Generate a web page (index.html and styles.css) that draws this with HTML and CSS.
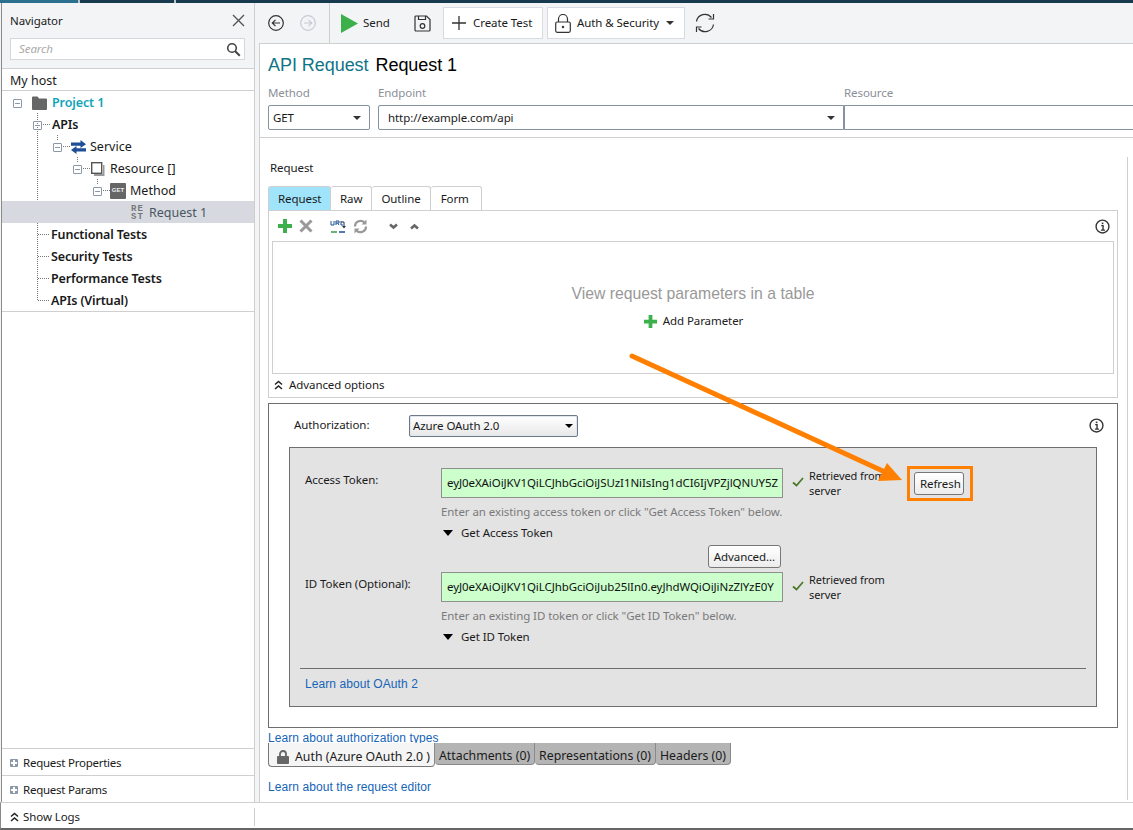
FILE: index.html
```html
<!DOCTYPE html>
<html lang="en">
<head>
    <meta charset="UTF-8">
    <meta name="viewport" content="width=device-width, initial-scale=1.0">
    <title>API Request</title>
    <link rel="stylesheet" href="styles.css">
</head>
<body>
    <div class="top-strip">
        <span class="strip-a"></span><span class="strip-b"></span><span class="strip-c"></span>
    </div>

    <div class="app">
        <aside class="navigator">
            <div class="nav-head">
                <div class="nav-title">
                    <span>Navigator</span>
                    <svg width="13" height="13" viewBox="0 0 13 13"><path d="M1 1l11 11M12 1L1 12" stroke="#555" stroke-width="1.4" fill="none"/></svg>
                </div>
                <div class="nav-search">
                    <span>Search</span>
                    <svg width="15" height="15" viewBox="0 0 15 15"><circle cx="6" cy="6" r="4.3" stroke="#444" stroke-width="1.6" fill="none"/><path d="M9.2 9.2l4.6 4.6" stroke="#444" stroke-width="2"/></svg>
                </div>
            </div>
            <div class="host-row">My host</div>
            <div class="tree">
                <svg class="tree-lines" width="254" height="220" viewBox="0 0 254 220">
                    <g stroke="#777" stroke-dasharray="1 1" fill="none">
                        <path d="M37.5 22V209.5H50"/>
                        <path d="M43 33.5H50"/>
                        <path d="M57.5 44V50M63 55.5H70"/>
                        <path d="M77.5 66V72M83 77.5H90"/>
                        <path d="M97.5 88V94M103 99.500H110"/>
                        <path d="M117.5 110V121.5H130"/>
                        <path d="M38 143.5H50M38 165.5H50M38 187.5H50"/>
                    </g>
                </svg>
                <div class="tree-row project">
                    <i class="toggle"></i>
                    <svg width="15" height="14" viewBox="0 0 15 14"><path d="M0 1.5a1 1 0 0 1 1-1h4.500l1.500 2h7a1 1 0 0 1 1 1V13a1 1 0 0 1-1 1H1a1 1 0 0 1-1-1z" fill="#666"/></svg>
                    <span>Project 1</span>
                </div>
                <div class="tree-row lvl-1 strong"><i class="toggle"></i><span>APIs</span></div>
                <div class="tree-row lvl-2">
                    <i class="toggle"></i>
                    <svg width="15" height="14" viewBox="0 0 15 14"><path d="M0 2.500h9.500V0L15 4.200 9.500 8V5.800H0zM15 8.300H5.500V6L0 10l5.500 4v-2.400H15z" fill="#1f4e96"/></svg>
                    <span>Service</span>
                </div>
                <div class="tree-row lvl-3">
                    <i class="toggle"></i>
                    <svg width="14" height="15" viewBox="0 0 14 15"><path d="M3 12h9V3h1.500v11H3z" fill="#999"/><rect x=".7" y=".7" width="10" height="10.600" fill="#fff" stroke="#555" stroke-width="1.4"/></svg>
                    <span>Resource []</span>
                </div>
                <div class="tree-row lvl-4">
                    <i class="toggle"></i>
                    <b class="get-badge">GET</b>
                    <span>Method</span>
                </div>
                <div class="tree-row lvl-5 selected">
                    <b class="rest-badge">RE<br>ST</b>
                    <span>Request 1</span>
                </div>
                <div class="tree-row flat strong"><span>Functional Tests</span></div>
                <div class="tree-row flat strong"><span>Security Tests</span></div>
                <div class="tree-row flat strong"><span>Performance Tests</span></div>
                <div class="tree-row flat strong"><span>APIs (Virtual)</span></div>
            </div>
            <div class="nav-fill"></div>
            <div class="nav-section"><i class="plus-box"></i>Request Properties</div>
            <div class="nav-section"><i class="plus-box"></i>Request Params</div>
        </aside>

        <main class="main">
            <div class="toolbar">
                <div class="tool-nav">
                    <svg width="16" height="16" viewBox="0 0 16 16"><circle cx="8" cy="8" r="7.300" fill="none" stroke="#333" stroke-width="1.2"/><path d="M12 8H4.500M7.500 4.800L4.300 8l3.200 3.200" fill="none" stroke="#333" stroke-width="1.2"/></svg>
                    <svg width="16" height="16" viewBox="0 0 16 16"><circle cx="8" cy="8" r="7.300" fill="none" stroke="#c4ccd4" stroke-width="1.2"/><path d="M4 8h7.500M8.500 4.800L11.700 8l-3.200 3.200" fill="none" stroke="#c4ccd4" stroke-width="1.2"/></svg>
                </div>
                <div class="tool-send">
                    <svg width="17" height="19" viewBox="0 0 17 19"><path d="M0 0l17 9.500L0 19z" fill="#3cb04a"/></svg>
                    <span>Send</span>
                </div>
                <svg class="tool-save" width="17" height="17" viewBox="0 0 17 17"><path d="M1 2a1 1 0 0 1 1-1h10.500L16 4.500V15a1 1 0 0 1-1 1H2a1 1 0 0 1-1-1z" fill="none" stroke="#333" stroke-width="1.2"/><path d="M4.500 1v3.500h7V1" fill="none" stroke="#333" stroke-width="1.2"/><circle cx="8.500" cy="11" r="2.300" fill="none" stroke="#333" stroke-width="1.2"/></svg>
                <div class="tool-btn create-btn">
                    <svg width="14" height="14" viewBox="0 0 14 14"><path d="M7 0v14M0 7h14" stroke="#333" stroke-width="1.3"/></svg>
                    <span>Create Test</span>
                </div>
                <div class="tool-btn auth-btn">
                    <svg width="16" height="19" viewBox="0 0 16 19"><rect x=".7" y="8" width="14.600" height="10.300" rx="1.500" fill="none" stroke="#333" stroke-width="1.2"/><path d="M3.500 8V5a4.500 4.500 0 0 1 9 0v3" fill="none" stroke="#333" stroke-width="1.2"/><circle cx="8" cy="13" r="1.200" fill="#333"/></svg>
                    <span>Auth &amp; Security</span>
                    <i class="caret"></i>
                </div>
                <svg class="tool-sync" width="20" height="20" viewBox="0 0 20 20"><path d="M1.500 8.500A8.500 8.500 0 0 1 16.500 4.500M18.500 11.500A8.500 8.500 0 0 1 3.500 15.500" fill="none" stroke="#333" stroke-width="1.2"/><path d="M18.500 1v5h-5M1.500 19v-5h5" fill="none" stroke="#333" stroke-width="1.2"/></svg>
            </div>

            <div class="content">
                <div class="request-head">
                    <h1><span class="title-kind">API Request</span> <span class="title-name">Request 1</span></h1>
                    <div class="fields">
                        <div class="field method-field">
                            <label>Method</label>
                            <div class="control">GET<i class="caret"></i></div>
                        </div>
                        <div class="field endpoint-field">
                            <label>Endpoint</label>
                            <div class="control">http://example.com/api<i class="caret"></i></div>
                        </div>
                        <div class="field resource-field">
                            <label>Resource</label>
                            <div class="control"></div>
                        </div>
                    </div>
                </div>

                <div class="editor">
                    <div class="section-label">Request</div>
                    <div class="tabs">
                        <div class="tab active">Request</div>
                        <div class="tab">Raw</div>
                        <div class="tab">Outline</div>
                        <div class="tab">Form</div>
                    </div>
                    <div class="params-panel">
                        <div class="params-tools">
                            <svg width="16" height="16" viewBox="0 0 16 16"><path d="M6 1h4v5h5v4h-5v5H6v-5H1V6h5z" fill="#3cb04a"/></svg>
                            <svg class="tool-x" width="14" height="14" viewBox="0 0 14 14"><path d="M1.500 1.500l11 11M12.500 1.500l-11 11" stroke="#999" stroke-width="3"/></svg>
                            <svg class="tool-url" width="16" height="15" viewBox="0 0 16 15"><path d="M11 3h3v5" fill="none" stroke="#234" stroke-width="1"/><path d="M12 7l2 2.500L16 7" fill="#234"/><path d="M1 13h6" stroke="#3a9a48" stroke-width="1.500"/><path d="M9 13h6" stroke="#1f4e96" stroke-width="1.500"/><path d="M1 2v4h3V2M6 6V2h3v2H6M9 6L7.500 4M11 2v4h2" fill="none" stroke="#1f4e96" stroke-width="1"/></svg>
                            <svg width="15" height="15" viewBox="0 0 15 15"><path d="M2 7.500A5.500 5.500 0 0 1 11.500 3.600M13 7.500A5.500 5.500 0 0 1 3.500 11.400" fill="none" stroke="#999" stroke-width="2.200"/><path d="M13.500 .5v5h-5zM1.500 14.500v-5h5z" fill="#999"/></svg>
                            <svg class="tool-chev" width="9" height="7" viewBox="0 0 9 7"><path d="M1 1.500l3.500 3 3.500-3" fill="none" stroke="#666" stroke-width="2.500"/></svg>
                            <svg class="tool-chev" width="9" height="7" viewBox="0 0 9 7"><path d="M1 5.500l3.500-3 3.500 3" fill="none" stroke="#666" stroke-width="2.500"/></svg>
                            <svg class="info" width="15" height="15" viewBox="0 0 14 14"><circle cx="7" cy="7" r="6" fill="none" stroke="#333" stroke-width="1.300"/><path d="M5.800 6.200H7.500V10.200M5.500 10.400h3.800" fill="none" stroke="#333" stroke-width="1.300"/><rect x="6.300" y="3.300" width="1.500" height="1.500" fill="#333"/></svg>
                        </div>
                        <div class="params-empty">
                            <div class="empty-text">View request parameters in a table</div>
                            <div class="add-param">
                                <svg width="15" height="15" viewBox="0 0 16 16"><path d="M6 1h4v5h5v4h-5v5H6v-5H1V6h5z" fill="#3cb04a"/></svg>
                                <span>Add Parameter</span>
                            </div>
                        </div>
                        <div class="advanced-row">
                            <svg width="9" height="10" viewBox="0 0 9 10"><path d="M1 4.500l3.500-3 3.500 3M1 9l3.500-3 3.500 3" fill="none" stroke="#222" stroke-width="1.500"/></svg>
                            <span>Advanced options</span>
                        </div>
                    </div>

                    <div class="auth-panel">
                        <div class="auth-top">
                            <span class="auth-label">Authorization:</span>
                            <div class="auth-select">Azure OAuth 2.0<i class="caret dark"></i></div>
                            <svg class="info" width="15" height="15" viewBox="0 0 14 14"><circle cx="7" cy="7" r="6" fill="none" stroke="#333" stroke-width="1.300"/><path d="M5.800 6.200H7.500V10.200M5.500 10.400h3.800" fill="none" stroke="#333" stroke-width="1.300"/><rect x="6.300" y="3.300" width="1.500" height="1.500" fill="#333"/></svg>
                        </div>
                        <div class="oauth-box">
                            <div class="token-row">
                                <div class="token-label">Access Token:</div>
                                <div class="token-value">eyJ0eXAiOiJKV1QiLCJhbGciOiJSUzI1NiIsIng1dCI6IjVPZjlQNUY5Z</div>
                                <svg class="check" width="12" height="10" viewBox="0 0 12 10"><path d="M1 5.500l3.500 3L11 1" fill="none" stroke="#4b7a28" stroke-width="1.800"/></svg>
                                <div class="token-status">Retrieved from server</div>
                                <div class="refresh-wrap"><div class="win-btn refresh-btn">Refresh</div></div>
                            </div>
                            <div class="token-hint">Enter an existing access token or click "Get Access Token" below.</div>
                            <div class="token-get"><i class="caret dark big"></i>Get Access Token</div>
                            <div class="advanced-wrap"><div class="win-btn">Advanced...</div></div>
                            <div class="token-row">
                                <div class="token-label">ID Token (Optional):</div>
                                <div class="token-value">eyJ0eXAiOiJKV1QiLCJhbGciOiJub25lIn0.eyJhdWQiOiJiNzZlYzE0Y</div>
                                <svg class="check" width="12" height="10" viewBox="0 0 12 10"><path d="M1 5.500l3.500 3L11 1" fill="none" stroke="#4b7a28" stroke-width="1.800"/></svg>
                                <div class="token-status">Retrieved from server</div>
                            </div>
                            <div class="token-hint">Enter an existing ID token or click "Get ID Token" below.</div>
                            <div class="token-get"><i class="caret dark big"></i>Get ID Token</div>
                            <div class="oauth-foot"><a href="#">Learn about OAuth 2</a></div>
                        </div>
                    </div>

                    <a class="auth-link" href="#">Learn about authorization types</a>
                    <div class="bottom-tabs">
                        <div class="btab active">
                            <svg width="12" height="14" viewBox="0 0 12 14"><path d="M3 6V4a3 3 0 0 1 6 0v2" fill="none" stroke="#666" stroke-width="1.800"/><rect y="6" width="12" height="8" rx="1" fill="#666"/></svg>
                            <span>Auth (Azure OAuth 2.0 )</span>
                        </div>
                        <div class="btab">Attachments (0)</div>
                        <div class="btab">Representations (0)</div>
                        <div class="btab">Headers (0)</div>
                    </div>
                    <a class="editor-link" href="#">Learn about the request editor</a>
                </div>
            </div>
        </main>
    </div>

    <div class="status-bar">
        <div class="show-logs">
            <svg width="9" height="10" viewBox="0 0 9 10"><path d="M1 4.500l3.500-3 3.500 3M1 9l3.500-3 3.500 3" fill="none" stroke="#222" stroke-width="1.500"/></svg>
            <span>Show Logs</span>
        </div>
    </div>

    <!-- annotation drawn on top of the screenshot -->
    <svg class="arrow" width="1133" height="830" viewBox="0 0 1133 830">
        <path d="M632 356L885 472" stroke="#ff8000" stroke-width="5" stroke-linecap="round" fill="none"/>
        <path d="M887 463L902 480L878 481z" fill="#ff8000"/>
    </svg>
</body>
</html>
```

FILE: styles.css
```css
:root {
    --panel-color: #f3f4f6;
    --line-color: #cfcfcf;
    --dark-line: #6e6e6e;
    --text-color: #1a1a1a;
    --link-color: #1565b8;
}
html, body {
    margin: 0;
    padding: 0;
}
body {
    position: relative;
    width: 1133px;
    height: 830px;
    overflow: hidden;
    display: flex;
    flex-direction: column;
    background-color: var(--panel-color);
    color: var(--text-color);
    font-family: 'Noto Sans', 'Open Sans', Arial, sans-serif;
    font-size: 11.5px;
    letter-spacing: -0.08px;
    line-height: 16px;
}
a {
    color: var(--link-color);
    text-decoration: none;
    font-family: 'Liberation Sans', Arial, sans-serif;
    font-size: 12px;
    letter-spacing: 0.08px;
}

/* top strip */
.top-strip {
    display: flex;
    gap: 2px;
    height: 3px;
    flex: none;
    background-color: #b8c4cc;
}
.strip-a { width: 78px; background-color: #2d6f8e; }
.strip-b { width: 94px; background-color: #173a4e; }
.strip-c { flex: 1; background-color: #173a4e; }

.app {
    flex: 1;
    display: flex;
    min-height: 0;
}

/* navigator */
.navigator {
    width: 252px;
    margin-left: 1px;
    display: flex;
    flex-direction: column;
    background-color: #fff;
    border-left: 1px solid #8a8a8a;
    border-right: 1px solid var(--line-color);
}
.nav-head {
    height: 66px;
    padding: 0 9px 0 8px;
    box-sizing: border-box;
    background-color: var(--panel-color);
    border-bottom: 1px solid var(--line-color);
}
.nav-title {
    display: flex;
    justify-content: space-between;
    align-items: center;
    height: 35px;
}
.nav-search {
    display: flex;
    justify-content: space-between;
    align-items: center;
    height: 22px;
    padding: 0 3px 0 8px;
    box-sizing: border-box;
    background-color: #fff;
    border: 1px solid #d4d8dc;
    color: #aaa;
    font-style: italic;
}
.host-row {
    height: 22px;
    line-height: 23px;
    padding-left: 8px;
    box-sizing: border-box;
    font-size: 12.5px;
    letter-spacing: 0;
    border-bottom: 1px solid var(--line-color);
}
.tree {
    position: relative;
    height: 220px;
    border-bottom: 1px solid var(--line-color);
    font-size: 12.5px;
    letter-spacing: 0;
}
.tree-lines {
    position: absolute;
    left: -2px;
    top: 0;
    pointer-events: none;
}
.tree-row {
    position: relative;
    display: flex;
    align-items: center;
    height: 22px;
    box-sizing: border-box;
    padding-top: 2px;
    gap: 5px;
}
.toggle {
    width: 7px;
    height: 7px;
    flex: none;
    border: 1px solid #8b98a8;
    border-radius: 1px;
    background: linear-gradient(#8b98a8, #8b98a8) center / 5px 1px no-repeat;
}
.project { padding-left: 11px; color: #12a5b8; font-weight: 600; letter-spacing: -0.1px; }
.project svg { margin-left: 5px; }
.lvl-1 { padding-left: 31px; }
.lvl-1 .toggle { margin-right: 5px; }
.lvl-2 { padding-left: 51px; }
.lvl-2 svg { margin: 0 -1px 0 4px; }
.lvl-3 { padding-left: 71px; }
.lvl-3 svg { margin-left: 4px; }
.lvl-4 { padding-left: 91px; }
.lvl-4 .get-badge { margin: 0 -1px 0 3px; }
.lvl-5 { padding-left: 129px; gap: 3px; }
.flat { padding-left: 49px; }
.strong { font-weight: 600; letter-spacing: -0.15px; }
.selected {
    background-color: #d6dae0;
    color: #4a5560;
}
.get-badge {
    width: 16px;
    height: 16px;
    flex: none;
    border-radius: 1px;
    background-color: #666;
    color: #eee;
    font-family: 'Liberation Sans', Arial, sans-serif;
    font-size: 6px;
    line-height: 14px;
    text-align: center;
}
.rest-badge {
    width: 15px;
    color: #777;
    font-family: 'Liberation Mono', monospace;
    font-size: 9px;
    line-height: 8px;
    letter-spacing: 1px;
}
.nav-fill { flex: 1; }
.nav-section {
    display: flex;
    align-items: center;
    gap: 5px;
    height: 27px;
    padding: 1px 0 0 8px;
    box-sizing: border-box;
    letter-spacing: -0.25px;
    border-top: 1px solid var(--line-color);
}
.plus-box {
    width: 8px;
    height: 8px;
    border-radius: 1px;
    background:
        linear-gradient(#fff, #fff) center / 6px 2px no-repeat,
        linear-gradient(#fff, #fff) center / 2px 6px no-repeat,
        #8b98a8;
}

/* main column */
.main {
    flex: 1;
    min-width: 0;
    display: flex;
    flex-direction: column;
    margin-left: 4px;
}
.toolbar {
    height: 40px;
    flex: none;
    display: flex;
    align-items: center;
}
.tool-nav {
    display: flex;
    align-items: center;
    gap: 16px;
    width: 71px;
    height: 40px;
    padding-left: 9px;
    box-sizing: border-box;
    border-right: 1px solid var(--line-color);
}
.tool-send {
    display: flex;
    align-items: center;
    gap: 5px;
    width: 50px;
    margin-left: 11px;
    color: #222;
}
.tool-save { margin-left: 23px; }
.tool-btn {
    display: flex;
    align-items: center;
    height: 32px;
    box-sizing: border-box;
    white-space: nowrap;
    background-color: #fff;
    border: 1px solid #d8dce0;
}
.create-btn {
    margin-left: 12px;
    width: 100px;
    padding-left: 8px;
    gap: 7px;
}
.auth-btn {
    margin-left: 4px;
    width: 138px;
    padding-left: 7px;
    gap: 6px;
}
.auth-btn .caret { margin-left: 1px; }
.tool-sync { margin-left: 10px; }
.caret {
    display: inline-block;
    width: 0;
    height: 0;
    border-left: 4px solid transparent;
    border-right: 4px solid transparent;
    border-top: 4px solid #333;
}
.caret.dark { border-top-color: #000; }
.caret.big {
    border-left-width: 5px;
    border-right-width: 5px;
    border-top-width: 6px;
    margin-right: 8px;
}

.content {
    flex: 1;
    min-height: 0;
    background-color: #fff;
    border-top: 1px solid var(--line-color);
    border-left: 1px solid var(--line-color);
}
.request-head {
    height: 94px;
    box-sizing: border-box;
    padding: 10px 0 0 8px;
    border-bottom: 1px solid var(--line-color);
}
h1 {
    margin: 0;
    font-family: 'Liberation Sans', Arial, sans-serif;
    font-size: 18px;
    font-weight: 400;
    line-height: 22px;
    letter-spacing: -0.05px;
}
.title-kind { color: #0f7488; }
.title-name { color: #000; margin-left: 2px; }
.fields {
    display: flex;
    margin-top: 9px;
}
.field label {
    display: block;
    height: 16px;
    margin-bottom: 4px;
    color: #8a8f98;
}
.control {
    display: flex;
    justify-content: space-between;
    align-items: center;
    height: 25px;
    box-sizing: border-box;
    padding: 0 8px 0 4px;
    background-color: #fff;
    border: 1px solid #8592a0;
}
.method-field { width: 102px; margin-right: 8px; }
.method-field .control { border-radius: 2px; }
.endpoint-field { width: 466px; }
.endpoint-field .control { padding-left: 9px; border-radius: 2px 0 0 2px; }
.resource-field { flex: 1; }
.resource-field .control { border-right: 0; border-radius: 0; }

/* editor */
.editor {
    height: 643px;
    margin-top: 19px;
    width: 868px;
    box-sizing: border-box;
    padding: 3px 0 0 8px;
    border-right: 1px solid var(--line-color);
}
.section-label {
    height: 16px;
    padding-left: 2px;
}
.tabs {
    display: flex;
    margin-top: 10px;
    height: 24px;
}
.tab {
    height: 24px;
    line-height: 24px;
    padding: 0 9px;
    box-sizing: border-box;
    border: 1px solid var(--line-color);
    border-bottom: 0;
    border-left: 0;
    border-radius: 3px 3px 0 0;
}
.tab:last-child { padding: 0 12px 0 10px; }
.tab.active {
    width: 63px;
    padding: 0 9px;
    background-color: #a0e4fb;
    border-left: 1px solid var(--line-color);
}
.params-panel {
    width: 850px;
    height: 188px;
    box-sizing: border-box;
    padding: 0 3px;
    display: flex;
    flex-direction: column;
    border: 1px solid var(--line-color);
}
.params-tools {
    display: flex;
    align-items: center;
    height: 30px;
    padding-left: 5px;
    flex: none;
}
.tool-x { margin-left: 6px; }
.tool-url { margin-left: 17px; margin-right: 7px; }
.tool-chev { margin-left: 21px; }
.tool-chev + .tool-chev { margin-left: 12px; }
.params-tools .info { margin-left: auto; margin-right: 4px; }
.params-empty {
    flex: 1;
    display: flex;
    flex-direction: column;
    align-items: center;
    border: 1px solid var(--line-color);
}
.empty-text {
    margin-top: 42px;
    color: #999;
    font-family: 'Liberation Sans', Arial, sans-serif;
    font-size: 15.75px;
    letter-spacing: 0;
    line-height: 20px;
}
.add-param {
    display: flex;
    align-items: center;
    gap: 5px;
    margin-top: 9px;
    color: #222;
}
.advanced-row {
    display: flex;
    align-items: center;
    gap: 6px;
    height: 23px;
    flex: none;
    box-sizing: border-box;
    padding: 0 0 2px 2px;
}

/* authorization */
.auth-panel {
    width: 850px;
    height: 325px;
    margin-top: 5px;
    box-sizing: border-box;
    padding: 0 20px;
    border: 1px solid var(--dark-line);
}
.auth-top {
    display: flex;
    align-items: center;
    height: 43px;
}
.auth-label {
    width: 115px;
    padding: 0 0 2px 5px;
}
.auth-select {
    display: flex;
    justify-content: space-between;
    align-items: center;
    width: 169px;
    height: 22px;
    box-sizing: border-box;
    padding: 0 4px 0 3px;
    border: 1px solid #6e7a88;
    border-radius: 2px;
    background: linear-gradient(#fff, #e8e8e8);
    box-shadow: 0 0 0 1px #dfe6ee inset;
}
.auth-top .info { margin-left: auto; margin-right: -7px; }
.oauth-box {
    height: 260px;
    box-sizing: border-box;
    padding: 20px 10px 0 15px;
    background-color: #e3e3e3;
    border: 1px solid var(--dark-line);
}
.token-row {
    display: flex;
    align-items: flex-start;
}
.token-label {
    width: 136px;
    padding-top: 4px;
}
.token-value {
    width: 342px;
    height: 30px;
    box-sizing: border-box;
    padding: 0 4px 0 5px;
    overflow: hidden;
    white-space: nowrap;
    line-height: 28px;
    color: #111;
    background-color: #ccffcc;
    border: 1px solid #8f8f8f;
}
.check {
    margin: 9px 0 0 9px;
    flex: none;
}
.token-status {
    width: 80px;
    margin-left: 5px;
    font-size: 11px;
    line-height: 15px;
}
.refresh-wrap {
    margin: -2px 0 -3px 18px;
    padding: 3px 6px 3px 4px;
    border: 3px solid #ff8000;
}
.win-btn {
    height: 23px;
    line-height: 21px;
    padding: 0 5px;
    box-sizing: border-box;
    text-align: center;
    background: linear-gradient(#fff, #ececec);
    border: 1px solid #777;
    border-radius: 3px;
}
.refresh-btn { width: 50px; }
.token-hint {
    margin: 6px 0 0 136px;
    color: #7a7a7a;
}
.token-get {
    display: flex;
    align-items: center;
    height: 16px;
    margin: 5px 0 0 138px;
}
.advanced-wrap {
    display: flex;
    justify-content: flex-end;
    width: 476px;
    margin-top: 4px;
    margin-bottom: 4px;
}
.oauth-foot {
    margin: 23px 0 0 -5px;
    padding: 7px 0 0 5px;
    border-top: 1px solid var(--dark-line);
}

/* links and bottom tabs */
.auth-link {
    display: block;
    height: 16px;
    margin-top: 2px;
}
.bottom-tabs {
    display: flex;
    align-items: flex-start;
    margin-top: -3px;
    font-size: 12.3px;
    letter-spacing: 0;
}
.btab {
    height: 22px;
    line-height: 25px;
    padding: 0 4px;
    box-sizing: border-box;
    background-color: #b4b4b4;
    border: 1px solid #8a8a8a;
    border-top: 0;
    border-left: 0;
    border-radius: 0 0 4px 4px;
}
.btab.active {
    display: flex;
    align-items: center;
    gap: 6px;
    width: 167px;
    height: 24px;
    padding: 4px 0 0 8px;
    background-color: #f5f5f5;
    border-left: 1px solid #777;
    border-bottom: 1px solid #777;
}
.editor-link {
    display: block;
    margin-top: 12px;
}

/* status bar */
.status-bar {
    height: 28px;
    flex: none;
    box-sizing: border-box;
    background-color: #fff;
    border-top: 1px solid var(--line-color);
    border-bottom: 2px solid #666;
    border-left: 1px solid #8a8a8a;
    padding-left: 9px;
}
.show-logs {
    display: flex;
    align-items: center;
    gap: 4px;
    width: 244px;
    height: 18px;
    margin-top: 5px;
    border-right: 1px solid var(--line-color);
}

.arrow {
    position: absolute;
    left: 0;
    top: 0;
    pointer-events: none;
}
```
